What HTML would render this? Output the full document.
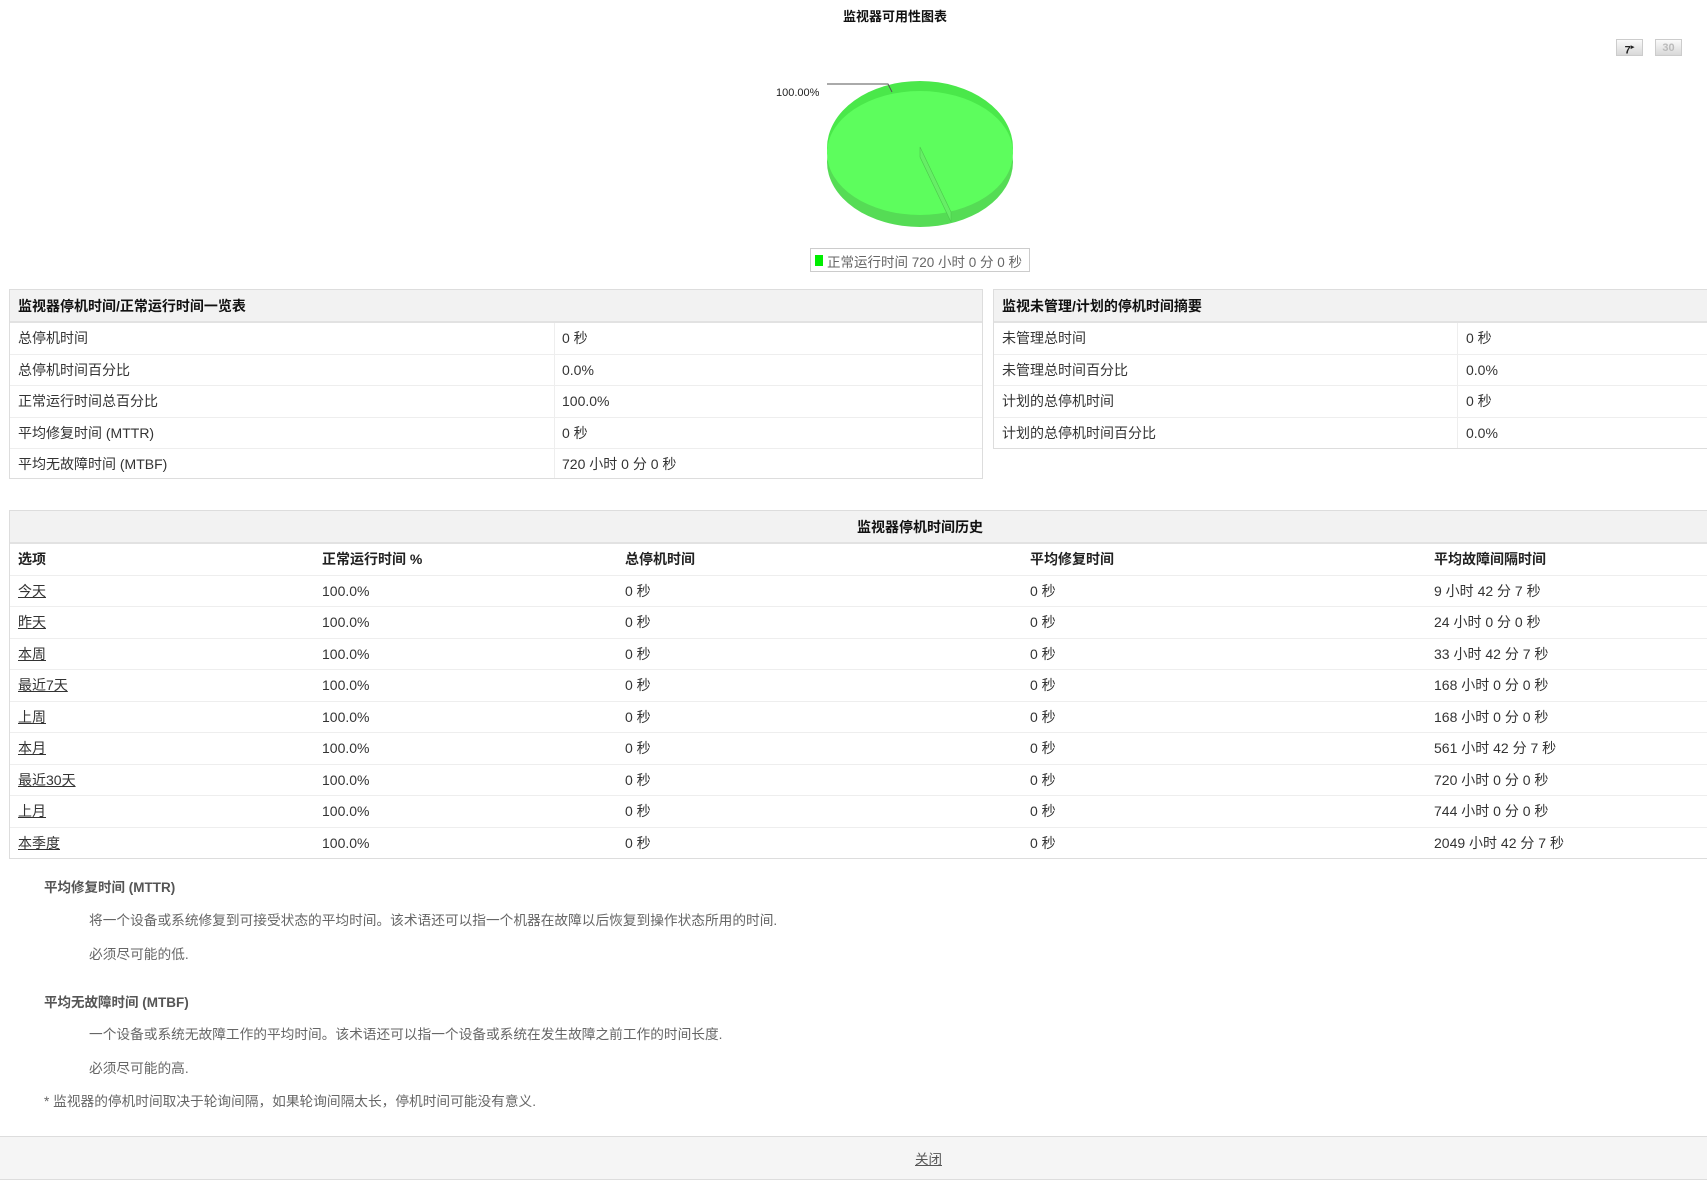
<!DOCTYPE html>
<html><head><meta charset="utf-8">
<style>
*{margin:0;padding:0;box-sizing:border-box}
body{width:1707px;height:1197px;background:#fff;font-family:"Liberation Sans","Noto Sans CJK SC",sans-serif;font-size:14px;color:#333;position:relative;overflow:hidden}
.a{position:absolute;white-space:nowrap}
.tbl{position:absolute;border:1px solid #ddd;background:#fff}
.hd{background:#f2f2f2;border-bottom:2px solid #e2e2e2;font-weight:bold;color:#111;height:33px;line-height:32px;padding-left:8px}
.row{height:31.5px;line-height:31px;border-bottom:1px solid #eee;position:relative}
.row span{position:absolute;top:0}
.row a{color:#333;text-decoration:underline}
.btn{position:absolute;top:39px;width:27px;height:17px;background:linear-gradient(#fafafa,#d8d8d8);border:1px solid #ccc;font:bold 11px "Liberation Sans",sans-serif;text-align:center;line-height:16px}
.n{font-size:13.7px;color:#666}
</style></head><body>
<div class="a" style="left:843px;top:6px;font-weight:bold;font-size:13px;color:#111">监视器可用性图表</div>
<div class="btn" style="left:1616px;color:#222">7<sup style="font-size:7px">▸</sup></div>
<div class="btn" style="left:1655px;color:#bbb">30</div>
<svg class="a" style="left:0;top:0" width="1707" height="290">
<ellipse cx="920" cy="162" rx="93" ry="65" fill="#55dc55"/>
<ellipse cx="920" cy="148" rx="93" ry="67" fill="#4ae84a"/>
<ellipse cx="920" cy="153" rx="93" ry="62" fill="#5dfd5d"/>
<polygon points="920,147 951,212 951,222 920,157" fill="#66ee66" stroke="#4cc84c" stroke-width="0.6"/>
<polyline points="827,84 888,84 892,92" fill="none" stroke="#555" stroke-width="1"/>
<text x="776" y="96" font-family="Liberation Sans" font-size="11" fill="#222">100.00%</text>
<rect x="810.5" y="248.5" width="219" height="23" fill="#fff" stroke="#ccc"/>
<rect x="815" y="255" width="8" height="11" fill="#00ee00"/>
</svg>
<div class="a" style="left:827px;top:251px;font-size:13.5px;color:#666">正常运行时间 720 小时 0 分 0 秒</div>

<div class="tbl" style="left:9px;top:289px;width:974px;height:190px">
<div class="hd">监视器停机时间/正常运行时间一览表</div>
<div class="row"><span style="left:8px">总停机时间</span><span style="left:552px">0 秒</span></div>
<div class="row"><span style="left:8px">总停机时间百分比</span><span style="left:552px">0.0%</span></div>
<div class="row"><span style="left:8px">正常运行时间总百分比</span><span style="left:552px">100.0%</span></div>
<div class="row"><span style="left:8px">平均修复时间 (MTTR)</span><span style="left:552px">0 秒</span></div>
<div class="row" style="border:0"><span style="left:8px">平均无故障时间 (MTBF)</span><span style="left:552px">720 小时 0 分 0 秒</span></div>
<div style="position:absolute;left:544px;top:33px;bottom:0;border-left:1px solid #eee"></div>
</div>

<div class="tbl" style="left:993px;top:289px;width:760px;height:160px">
<div class="hd">监视未管理/计划的停机时间摘要</div>
<div class="row"><span style="left:8px">未管理总时间</span><span style="left:472px">0 秒</span></div>
<div class="row"><span style="left:8px">未管理总时间百分比</span><span style="left:472px">0.0%</span></div>
<div class="row"><span style="left:8px">计划的总停机时间</span><span style="left:472px">0 秒</span></div>
<div class="row" style="border:0"><span style="left:8px">计划的总停机时间百分比</span><span style="left:472px">0.0%</span></div>
<div style="position:absolute;left:463px;top:33px;bottom:0;border-left:1px solid #eee"></div>
</div>

<div class="tbl" style="left:9px;top:510px;width:1822px;height:349px">
<div class="hd" style="text-align:center;padding:0">监视器停机时间历史</div>
<div class="row" style="font-weight:bold;color:#222"><span style="left:8px">选项</span><span style="left:312px">正常运行时间 %</span><span style="left:615px">总停机时间</span><span style="left:1020px">平均修复时间</span><span style="left:1424px">平均故障间隔时间</span></div>
<div class="row"><span style="left:8px"><a>今天</a></span><span style="left:312px">100.0%</span><span style="left:615px">0 秒</span><span style="left:1020px">0 秒</span><span style="left:1424px">9 小时 42 分 7 秒</span></div>
<div class="row"><span style="left:8px"><a>昨天</a></span><span style="left:312px">100.0%</span><span style="left:615px">0 秒</span><span style="left:1020px">0 秒</span><span style="left:1424px">24 小时 0 分 0 秒</span></div>
<div class="row"><span style="left:8px"><a>本周</a></span><span style="left:312px">100.0%</span><span style="left:615px">0 秒</span><span style="left:1020px">0 秒</span><span style="left:1424px">33 小时 42 分 7 秒</span></div>
<div class="row"><span style="left:8px"><a>最近7天</a></span><span style="left:312px">100.0%</span><span style="left:615px">0 秒</span><span style="left:1020px">0 秒</span><span style="left:1424px">168 小时 0 分 0 秒</span></div>
<div class="row"><span style="left:8px"><a>上周</a></span><span style="left:312px">100.0%</span><span style="left:615px">0 秒</span><span style="left:1020px">0 秒</span><span style="left:1424px">168 小时 0 分 0 秒</span></div>
<div class="row"><span style="left:8px"><a>本月</a></span><span style="left:312px">100.0%</span><span style="left:615px">0 秒</span><span style="left:1020px">0 秒</span><span style="left:1424px">561 小时 42 分 7 秒</span></div>
<div class="row"><span style="left:8px"><a>最近30天</a></span><span style="left:312px">100.0%</span><span style="left:615px">0 秒</span><span style="left:1020px">0 秒</span><span style="left:1424px">720 小时 0 分 0 秒</span></div>
<div class="row"><span style="left:8px"><a>上月</a></span><span style="left:312px">100.0%</span><span style="left:615px">0 秒</span><span style="left:1020px">0 秒</span><span style="left:1424px">744 小时 0 分 0 秒</span></div>
<div class="row" style="border:0"><span style="left:8px"><a>本季度</a></span><span style="left:312px">100.0%</span><span style="left:615px">0 秒</span><span style="left:1020px">0 秒</span><span style="left:1424px">2049 小时 42 分 7 秒</span></div>
</div>

<div class="a" style="left:44px;top:876px;font-weight:bold;font-size:13.5px;color:#555">平均修复时间 (MTTR)</div>
<div class="a n" style="left:89px;top:909px">将一个设备或系统修复到可接受状态的平均时间。该术语还可以指一个机器在故障以后恢复到操作状态所用的时间.</div>
<div class="a n" style="left:89px;top:943px">必须尽可能的低.</div>
<div class="a" style="left:44px;top:991px;font-weight:bold;font-size:13.5px;color:#555">平均无故障时间 (MTBF)</div>
<div class="a n" style="left:89px;top:1023px">一个设备或系统无故障工作的平均时间。该术语还可以指一个设备或系统在发生故障之前工作的时间长度.</div>
<div class="a n" style="left:89px;top:1057px">必须尽可能的高.</div>
<div class="a n" style="left:44px;top:1090px">* 监视器的停机时间取决于轮询间隔，如果轮询间隔太长，停机时间可能没有意义.</div>

<div class="a" style="left:0;top:1136px;width:1707px;height:44px;background:#f5f5f5;border-top:1px solid #ddd;border-bottom:1px solid #ddd"></div>
<div class="a" style="left:915px;top:1148px;font-size:13.5px;color:#555;text-decoration:underline">关闭</div>
</body></html>
